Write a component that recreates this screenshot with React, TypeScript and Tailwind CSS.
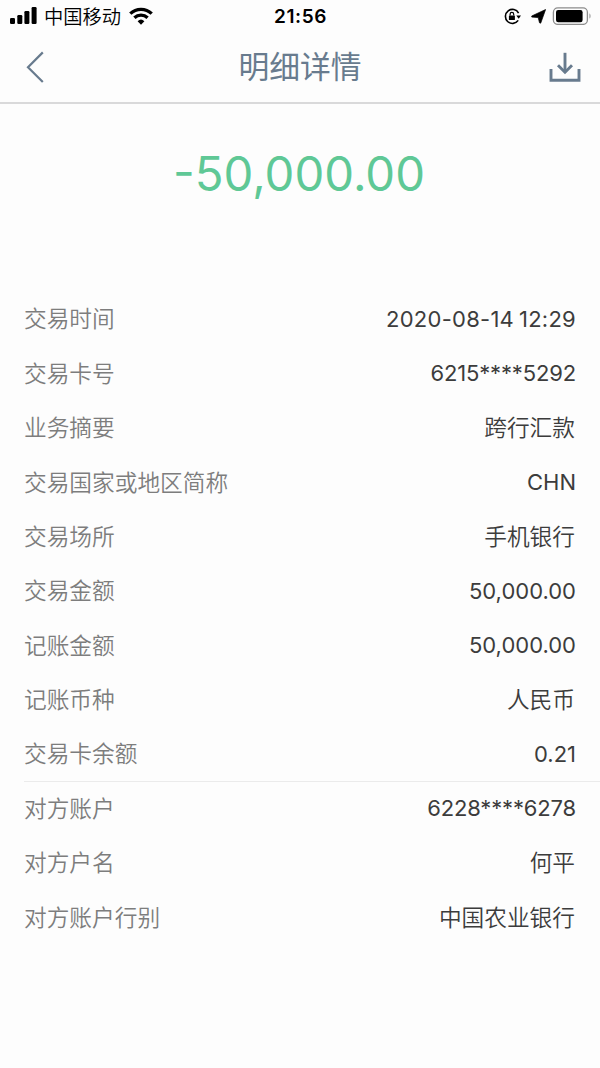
import React from "react";

interface DetailItem {
  label: string;
  value: string;
}

const transactionItems: DetailItem[] = [
  { label: "交易时间", value: "2020-08-14 12:29" },
  { label: "交易卡号", value: "6215****5292" },
  { label: "业务摘要", value: "跨行汇款" },
  { label: "交易国家或地区简称", value: "CHN" },
  { label: "交易场所", value: "手机银行" },
  { label: "交易金额", value: "50,000.00" },
  { label: "记账金额", value: "50,000.00" },
  { label: "记账币种", value: "人民币" },
  { label: "交易卡余额", value: "0.21" },
];

const accountItems: DetailItem[] = [
  { label: "对方账户", value: "6228****6278" },
  { label: "对方户名", value: "何平" },
  { label: "对方账户行别", value: "中国农业银行" },
];

// Latin values are set slightly smaller than the Chinese ones
const getValueClass = (value: string) => {
  if (/[\u4e00-\u9fa5]/.test(value)) return "pt-px text-[22.7px] font-[350]";
  if (value.includes("*")) return "-mr-px pb-px text-[22px] tracking-[-0.15px]";
  if (value.includes("-")) return "-mr-px pb-px text-[22px] tracking-[0.25px] word-spacing-tight [word-spacing:-1.5px]";
  return "-mr-px pb-px text-[22px]";
};

const StatusBar: React.FC = () => (
  <div className="grid h-8 grid-cols-3 items-center pl-[10px] pr-[9px] text-black">
    <div className="flex items-center">
      <svg width="27" height="17" viewBox="0 0 27 17" fill="currentColor">
        <rect x="0" y="11" width="5" height="6" rx="1.2" />
        <rect x="7.3" y="8" width="5" height="9" rx="1.2" />
        <rect x="14.4" y="4" width="5" height="13" rx="1.2" />
        <rect x="21.6" y="0" width="5" height="17" rx="1.2" />
      </svg>
      <span className="ml-[7px] pt-[3px] text-[19.3px] leading-none font-[350]">中国移动</span>
      <svg className="ml-[8px]" width="24" height="18" viewBox="0 0 24 18" fill="none" stroke="currentColor" strokeWidth="3.3">
        <path d="M1.3 6.6a15.4 15.4 0 0 1 21.4 0" />
        <path d="M5.4 10.8a9.6 9.6 0 0 1 13.2 0" />
        <path d="M8.6 14.2a5 5 0 0 1 6.8 0L12 17.8z" fill="currentColor" stroke="none" />
      </svg>
    </div>
    <span className="text-center text-[19px] leading-none font-semibold tracking-[0.6px]">21:56</span>
    <div className="flex items-center justify-end">
      <svg width="17" height="17" viewBox="0 0 17 17" fill="none">
        <path d="M14.6 5.1A7 7 0 1 0 14.2 12.4" stroke="currentColor" strokeWidth="1.6" />
        <path d="M12.3 7.6h4.7l-2.3 3.2z" fill="currentColor" />
        <rect x="4.9" y="7.4" width="6" height="4.6" rx="0.6" fill="currentColor" />
        <path d="M6.1 7.6V6.2a1.8 1.8 0 0 1 3.6 0v1.4" stroke="currentColor" strokeWidth="1.2" />
      </svg>
      <svg className="ml-[10px]" width="15" height="15" viewBox="0 0 15 15" fill="currentColor">
        <path d="M14.6 0.5 9.7 14.2 8.5 13.8 7.2 8.6 0.8 8.1 0.7 7z" stroke="currentColor" strokeWidth="0.7" strokeLinejoin="round" />
      </svg>
      <svg className="ml-[6px]" width="39" height="18" viewBox="0 0 39 18" fill="none">
        <rect x="1.4" y="0.8" width="34" height="16.6" rx="4.4" stroke="#8c8c8c" strokeWidth="1.3" />
        <rect x="4" y="3" width="26.6" height="12.2" rx="2.2" fill="currentColor" />
        <path d="M37.4 6.4v5.2c1.6-.6 1.6-4.6 0-5.2z" fill="#9a9a9a" />
      </svg>
    </div>
  </div>
);

const NavBar: React.FC = () => (
  <header className="flex h-[72px] items-center justify-between border-b-2 border-[#d9d9da] pl-[26px] pr-[19px] text-[#687b8e]">
    <button className="w-[26px]" aria-label="返回">
      <svg width="18" height="32" viewBox="0 0 18 32" fill="none" stroke="currentColor" strokeWidth="2.2">
        <path d="M16.8 1.4 2 16.2 16.8 31" />
      </svg>
    </button>
    <h1 className="text-[30.8px] leading-none">明细详情</h1>
    <button className="flex w-[33px] justify-end" aria-label="下载">
      <svg width="32" height="30" viewBox="0 0 32 30" fill="none" stroke="currentColor" strokeWidth="2.9">
        <path d="M2 17v11.2h28V17" />
        <path d="M16 0.8v19.4" />
        <path d="M9 13.2l7 7 7-7" />
      </svg>
    </button>
  </header>
);

const DetailList: React.FC<{ items: DetailItem[] }> = ({ items }) => (
  <dl>
    {items.map((item) => (
      <div
        key={item.label}
        className="flex h-[54.4px] items-center justify-between pr-[25px] leading-none"
      >
        <dt className="pt-px text-[22.7px] font-[350] text-[#7d7d7d]">{item.label}</dt>
        <dd className={`text-[#3c3c3c] ${getValueClass(item.value)}`}>{item.value}</dd>
      </div>
    ))}
  </dl>
);

const App: React.FC = () => {
  return (
    <div className="min-h-[1068px] w-[600px] bg-[#fdfdfd] font-[Inter,'Noto_Sans_CJK_SC',sans-serif]">
      <StatusBar />
      <NavBar />
      <div className="flex h-[188px] justify-center pt-[45px] pr-[2px] text-[47.3px] leading-[50px] text-[#5fc896]">
        -50,000.00
      </div>
      <div className="pl-6">
        <DetailList items={transactionItems} />
        <div className="-mt-px h-px bg-[#ebebeb]" />
        <DetailList items={accountItems} />
      </div>
    </div>
  );
};

export default App;
